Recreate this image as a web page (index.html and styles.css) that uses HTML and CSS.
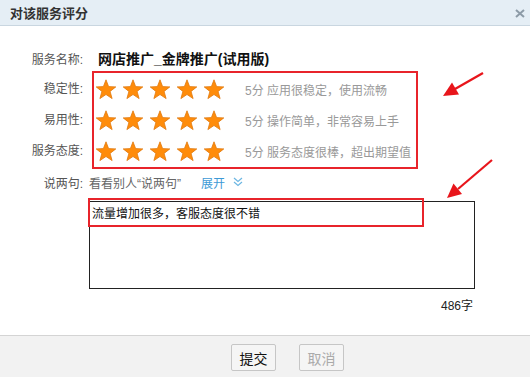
FILE: index.html
```
<!doctype html>
<html lang="zh">
<head>
    <meta charset="utf-8">
    <title>对该服务评分</title>
    <link rel="stylesheet" href="styles.css">
</head>
<body>

    <div class="Dialog">

        <!-- header -->
        <div class="Head">
            <span class="Head-title">对该服务评分</span>
            <svg class="Head-close" width="10" height="9" viewBox="0 0 10 9"><path d="M1 1 L9 8 M9 1 L1 8" stroke="#8d9ba7" stroke-width="2"/></svg>
        </div>

        <div class="Body">

            <div class="Row">
                <span class="Label">服务名称:</span>
                <span class="Service">网店推广_金牌推广(试用版)</span>
            </div>

            <!-- ratings -->
            <div class="Rate">
                <div class="Rate-labels">
                    <div class="Label">稳定性:</div>
                    <div class="Label">易用性:</div>
                    <div class="Label">服务态度:</div>
                </div>
                <div class="Rate-box">
                    <div class="Rate-row">
                        <div class="Stars" data-score="5"></div>
                        <span class="Rate-text">5分 应用很稳定，使用流畅</span>
                    </div>
                    <div class="Rate-row">
                        <div class="Stars" data-score="5"></div>
                        <span class="Rate-text">5分 操作简单，非常容易上手</span>
                    </div>
                    <div class="Rate-row">
                        <div class="Stars" data-score="5"></div>
                        <span class="Rate-text">5分 服务态度很棒，超出期望值</span>
                    </div>
                </div>
            </div>

            <div class="Row Row--say">
                <span class="Label">说两句:</span>
                <span class="Say-more">看看别人“说两句”</span>
                <span class="Say-open">展开</span>
                <svg class="Say-chevron" width="10" height="10" viewBox="0 0 10 10"><path d="M1 1 L5 4.5 L9 1 M1 5 L5 8.5 L9 5" fill="none" stroke="#6cb6e2" stroke-width="1.2"/></svg>
            </div>

            <div class="Comment">
                <div class="Comment-text">流量增加很多，客服态度很不错</div>
                <div class="Comment-mark"></div>
            </div>

            <div class="Count">486字</div>

        </div>

        <div class="Foot">
            <button class="Btn">提交</button>
            <button class="Btn Btn--off">取消</button>
        </div>

        <!-- annotation arrows -->
        <svg class="Arrows" width="530" height="377" viewBox="0 0 530 377">
            <line x1="483" y1="73" x2="455" y2="89" stroke="#e8151b" stroke-width="2.2"/>
            <polygon points="443,96 459,94.5 452,82.5" fill="#e8151b"/>
            <line x1="492" y1="160" x2="458" y2="189" stroke="#e8151b" stroke-width="2.2"/>
            <polygon points="447,198 462,194 453.5,183.5" fill="#e8151b"/>
        </svg>

    </div>

    <script>

        const starSvg = '<svg class="Star" width="22" height="21" viewBox="0 0 22 21">'
            + '<polygon points="11,0.8 13.6,7.6 20.8,7.9 15.1,12.4 17.1,19.6 11,15.5 4.9,19.6 6.9,12.4 1.2,7.9 8.4,7.6" fill="#ff8c0a" stroke="#e07a10" stroke-width="0.8"/>'
            + '</svg>';

        document.querySelectorAll('.Stars').forEach(function (el) {
            el.innerHTML = starSvg.repeat(Number(el.dataset.score));
        });

    </script>

</body>
</html>
```

FILE: styles.css
```
*, *:before, *:after {
    box-sizing: border-box;
    margin: 0;
    padding: 0;
}

* {
    font-family: "Liberation Sans", "Noto Sans CJK SC", sans-serif;
}

html, body {
    height: 100%;
    background: #fff;
}

.Dialog {
    position: relative;
    display: flex;
    flex-direction: column;
    width: 530px;
    height: 377px;
    font-size: 12px;
    color: #333;
}

.Head {
    display: flex;
    align-items: center;
    justify-content: space-between;
    height: 26px;
    padding: 0 5px 0 10px;
    background: #e5eef5;
    border-bottom: 1px solid #c9d6e0;
}

.Head-title {
    font-size: 13px;
    font-weight: bold;
    color: #333;
}

.Head-close {
    margin-top: 1px;
}

.Body {
    padding-top: 22px;
}

.Row {
    display: flex;
    align-items: center;
    height: 20px;
}

.Label {
    width: 83px;
    text-align: right;
    color: #555;
}

.Service {
    margin-left: 15px;
    font-size: 14px;
    font-weight: bold;
    color: #111;
}

.Rate {
    display: flex;
    margin-top: 3px;
}

.Rate-labels {
    padding-top: 3px;
    width: 92px;
}

.Rate-labels .Label {
    height: 31px;
    line-height: 31px;
}

.Rate-box {
    width: 326px;
    padding: 1px 0 0 1px;
    border: 2px solid #e8242b;
}

.Rate-row {
    display: flex;
    align-items: center;
    height: 31px;
}

.Stars {
    display: flex;
    gap: 5px;
    width: 150px;
}

.Star {
    display: block;
}

.Rate-text {
    color: #999;
}

.Row--say {
    margin-top: 3px;
}

.Say-more {
    margin-left: 6px;
    color: #666;
}

.Say-open {
    margin-left: 20px;
    color: #3d9ad6;
}

.Say-chevron {
    margin-left: 8px;
}

.Comment {
    position: relative;
    width: 386px;
    height: 88px;
    margin: 9px 0 0 89px;
    border: 1px solid #222;
}

.Comment-text {
    padding: 4px 2px;
    line-height: 16px;
    color: #111;
}

.Comment-mark {
    position: absolute;
    left: -2px;
    top: -4px;
    width: 336px;
    height: 29px;
    border: 2px solid #e8242b;
}

.Count {
    width: 473px;
    margin-top: 7px;
    text-align: right;
    color: #222;
}

.Foot {
    display: flex;
    gap: 23px;
    margin-top: auto;
    height: 42px;
    padding: 8px 0 0 231px;
    background: #f2f2f2;
    border-top: 1px solid #d4d4d4;
}

.Btn {
    width: 45px;
    height: 27px;
    font-size: 14px;
    color: #111;
    background: #f5f5f5;
    border: 1px solid #c6c6c6;
    border-radius: 2px;
}

.Btn--off {
    color: #aaa;
}

.Arrows {
    position: absolute;
    left: 0;
    top: 0;
    pointer-events: none;
}
```
